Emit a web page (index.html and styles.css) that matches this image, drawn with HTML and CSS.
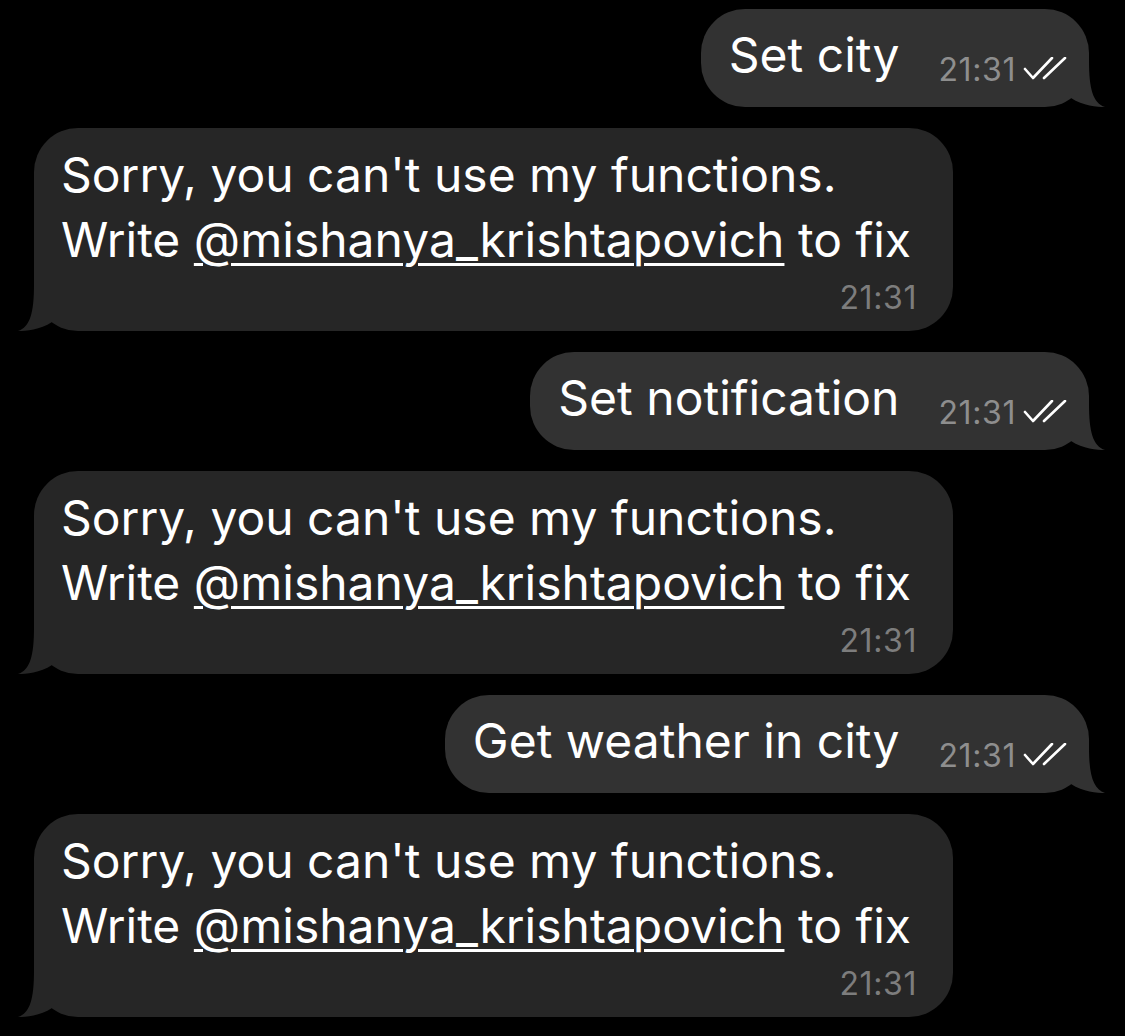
FILE: index.html
```html
<!DOCTYPE html>
<html>
<head>
<meta charset="utf-8">
<link rel="stylesheet" href="styles.css">
</head>
<body>
<div class="chat">
  <div class="row row-out">
    <div class="bubble bubble-out">
      <span class="msg">Set city</span>
      <span class="meta">
        <span class="time">21:31</span>
        <svg class="checks" viewBox="0 0 46 26" width="46" height="26"><path d="M3 12 L11 21 L30 1 M22 21 L43 1" fill="none" stroke="#fff" stroke-width="2.6" stroke-linecap="round" stroke-linejoin="round"/></svg>
      </span>
      <svg class="tail tail-out" viewBox="0 0 42 50" width="42" height="50"><path d="M24 4 C24 32 28 46 40 50 C32 50 18 49 6 41 L6 4 Z"/></svg>
    </div>
  </div>

  <div class="row row-in">
    <div class="bubble bubble-in">
      <p class="msg">Sorry, you can't use my functions.<br>Write <span class="link">@mishanya_krishtapovich</span> to fix</p>
      <div class="time time-in">21:31</div>
      <svg class="tail tail-in" viewBox="0 0 42 50" width="42" height="50"><path d="M18 4 C18 32 14 46 2 50 C10 50 24 49 36 41 L36 4 Z"/></svg>
    </div>
  </div>

  <div class="row row-out">
    <div class="bubble bubble-out">
      <span class="msg">Set notification</span>
      <span class="meta">
        <span class="time">21:31</span>
        <svg class="checks" viewBox="0 0 46 26" width="46" height="26"><path d="M3 12 L11 21 L30 1 M22 21 L43 1" fill="none" stroke="#fff" stroke-width="2.6" stroke-linecap="round" stroke-linejoin="round"/></svg>
      </span>
      <svg class="tail tail-out" viewBox="0 0 42 50" width="42" height="50"><path d="M24 4 C24 32 28 46 40 50 C32 50 18 49 6 41 L6 4 Z"/></svg>
    </div>
  </div>

  <div class="row row-in">
    <div class="bubble bubble-in">
      <p class="msg">Sorry, you can't use my functions.<br>Write <span class="link">@mishanya_krishtapovich</span> to fix</p>
      <div class="time time-in">21:31</div>
      <svg class="tail tail-in" viewBox="0 0 42 50" width="42" height="50"><path d="M18 4 C18 32 14 46 2 50 C10 50 24 49 36 41 L36 4 Z"/></svg>
    </div>
  </div>

  <div class="row row-out">
    <div class="bubble bubble-out">
      <span class="msg">Get weather in city</span>
      <span class="meta">
        <span class="time">21:31</span>
        <svg class="checks" viewBox="0 0 46 26" width="46" height="26"><path d="M3 12 L11 21 L30 1 M22 21 L43 1" fill="none" stroke="#fff" stroke-width="2.6" stroke-linecap="round" stroke-linejoin="round"/></svg>
      </span>
      <svg class="tail tail-out" viewBox="0 0 42 50" width="42" height="50"><path d="M24 4 C24 32 28 46 40 50 C32 50 18 49 6 41 L6 4 Z"/></svg>
    </div>
  </div>

  <div class="row row-in">
    <div class="bubble bubble-in">
      <p class="msg">Sorry, you can't use my functions.<br>Write <span class="link">@mishanya_krishtapovich</span> to fix</p>
      <div class="time time-in">21:31</div>
      <svg class="tail tail-in" viewBox="0 0 42 50" width="42" height="50"><path d="M18 4 C18 32 14 46 2 50 C10 50 24 49 36 41 L36 4 Z"/></svg>
    </div>
  </div>
</div>
</body>
</html>
```
FILE: styles.css
```css
html, body {
  margin: 0;
  padding: 0;
  background: #000;
}
body {
  width: 1125px;
  height: 1036px;
  overflow: hidden;
  font-family: Inter, "Noto Sans", "Liberation Sans", sans-serif;
  color: #fff;
}
.chat {
  display: flex;
  flex-direction: column;
  gap: 21px;
  padding-top: 9px;
}
.row {
  display: flex;
}
.row-out {
  justify-content: flex-end;
  padding-right: 36px;
}
.row-in {
  justify-content: flex-start;
  padding-left: 34px;
}
.bubble {
  position: relative;
}
.bubble-out {
  background: #323232;
  height: 98px;
  box-sizing: border-box;
  border-radius: 44px;
  display: flex;
  align-items: flex-start;
  padding: 22px 21px 0 28px;
}
.bubble-out .tail { fill: #323232; }
.bubble-in {
  background: #262626;
  width: 919px;
  box-sizing: border-box;
  border-radius: 44px;
  padding: 14px 36px 0 27px;
  height: 203px;
}
.bubble-in .tail { fill: #262626; }
.msg {
  font-size: 48px;
  line-height: 65px;
  margin: 0;
  white-space: nowrap;
  letter-spacing: 0;
}
.bubble-out .msg {
  line-height: 48px;
}
.meta {
  display: flex;
  align-items: center;
  margin-left: 39px;
  margin-top: 23px;
}
.time {
  font-size: 32px;
  line-height: 32px;
  color: #8e8e8e;
  letter-spacing: 0.6px;
}
.checks {
  margin-left: 6px;
  display: block;
}
.time-in {
  text-align: right;
  color: #7d7d7d;
  margin-top: 10px;
}
.link {
  text-decoration: underline;
  text-decoration-thickness: 3px;
  text-underline-offset: 6px;
}
.tail {
  position: absolute;
  bottom: 0;
}
.tail-out {
  right: -18px;
}
.tail-in {
  left: -18px;
}
```
